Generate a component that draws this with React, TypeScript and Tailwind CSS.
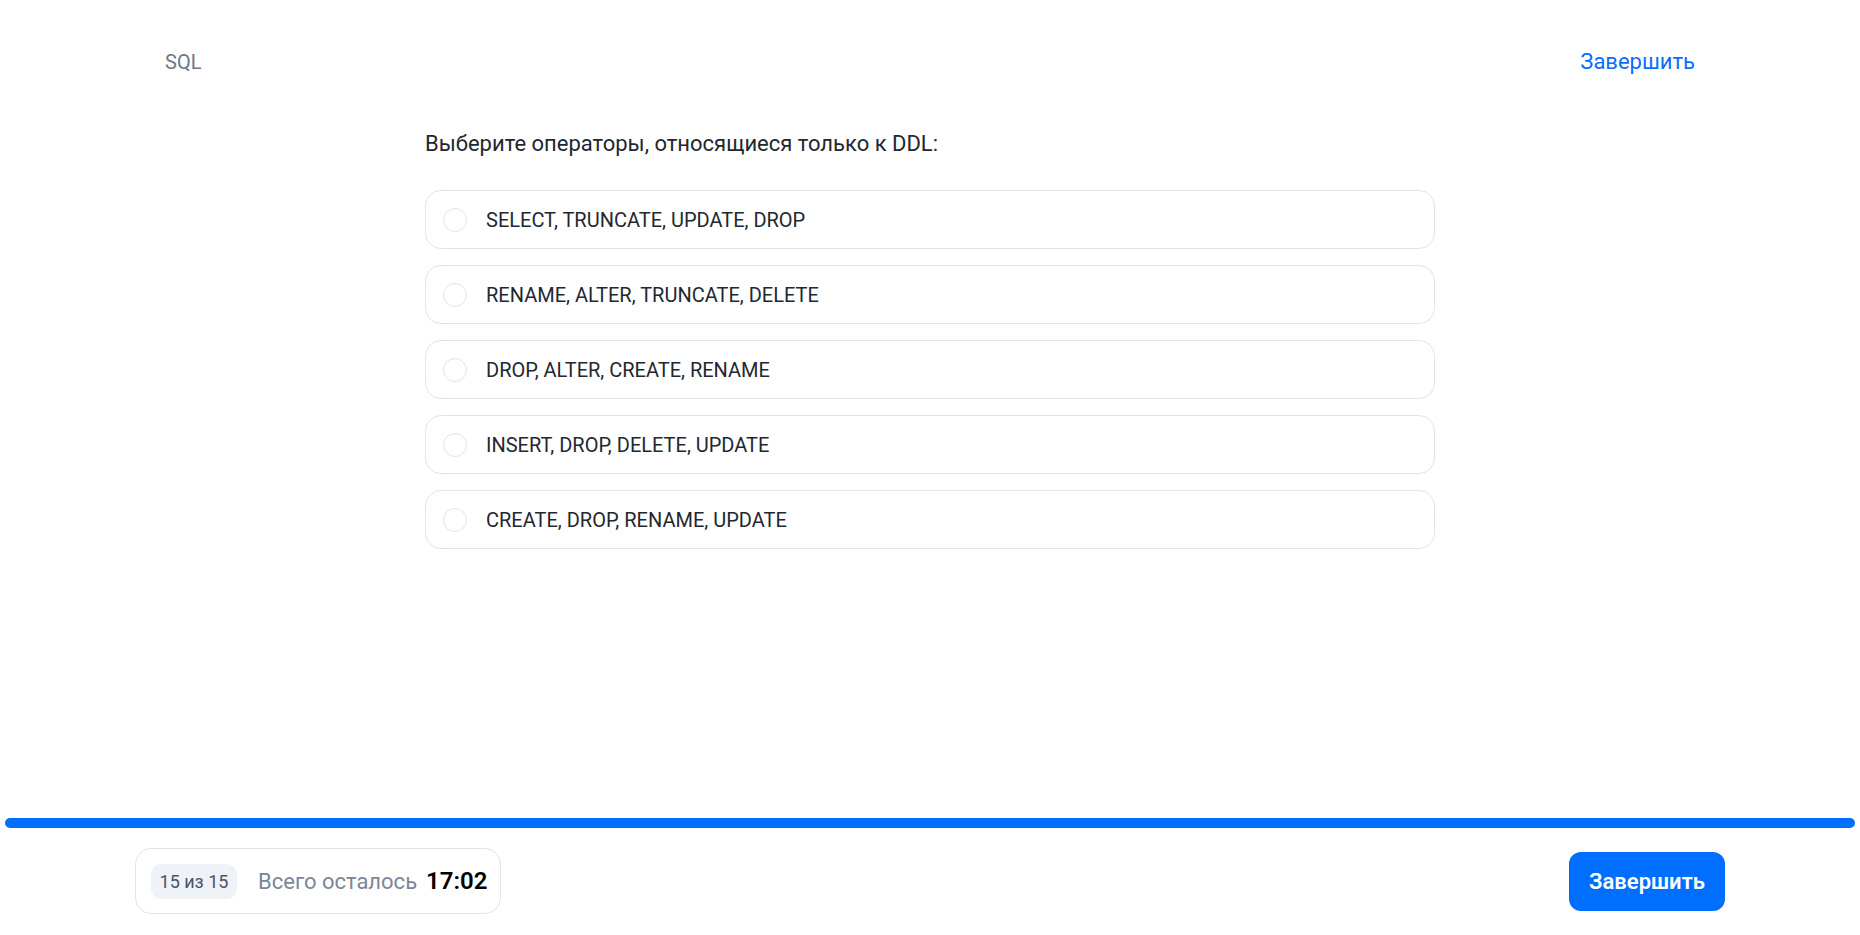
import React, { useState } from "react";

const options = [
  "SELECT, TRUNCATE, UPDATE, DROP",
  "RENAME, ALTER, TRUNCATE, DELETE",
  "DROP, ALTER, CREATE, RENAME",
  "INSERT, DROP, DELETE, UPDATE",
  "CREATE, DROP, RENAME, UPDATE",
];

const App = () => {
  const [selected, setSelected] = useState<number | null>(null);

  return (
    <div className="flex h-screen flex-col bg-white font-['Roboto',sans-serif] text-[#23272f]">
      {/* Header */}
      <div className="flex items-center justify-between px-[165px] pt-[48px]">
        <span className="text-[20px] leading-[28px] text-[#6b7789]">SQL</span>
        <button className="text-[22px] leading-[28px] text-[#0a6dff]">Завершить</button>
      </div>

      {/* Question */}
      <div className="mx-auto mt-[54px] w-[1010px] flex-1">
        <h2 className="text-[22px] leading-[28px] text-[#23272f]">
          Выберите операторы, относящиеся только к DDL:
        </h2>
        <div className="mt-[32px] flex flex-col gap-4">
          {options.map((opt, i) => (
            <label
              key={opt}
              className="flex h-[59px] cursor-pointer items-center gap-[19px] rounded-2xl border border-[#dfe4ec] px-[17px]"
              onClick={() => setSelected(i)}
            >
              <span
                className={
                  selected === i
                    ? "h-6 w-6 rounded-full border-[7px] border-[#006fff]"
                    : "h-6 w-6 rounded-full border-[1.5px] border-[#dfe4ec]"
                }
              />
              <span className="text-[20px] text-[#23272f]">{opt}</span>
            </label>
          ))}
        </div>
      </div>

      {/* Progress */}
      <div className="px-[5px]">
        <div className="h-[10px] w-full rounded-full bg-[#006fff]" />
      </div>

      {/* Footer */}
      <div className="mb-[21px] mt-[20px] flex items-center justify-between px-[135px]">
        <div className="flex h-[66px] items-center rounded-2xl border border-[#dfe4ec] pl-[15px] pr-[13px]">
          <span className="flex h-[35px] w-[86px] items-center justify-center rounded-[10px] bg-[#eff3f8] text-[18px] text-[#4a5464]">
            15 из 15
          </span>
          <span className="ml-[21px] text-[22px] text-[#7b8699]">Всего осталось</span>
          <span className="ml-[9px] text-[24px] font-semibold text-black">17:02</span>
        </div>
        <button className="h-[59px] w-[156px] rounded-xl bg-[#006fff] text-[22px] font-semibold text-white">
          Завершить
        </button>
      </div>
    </div>
  );
};

export default App;
